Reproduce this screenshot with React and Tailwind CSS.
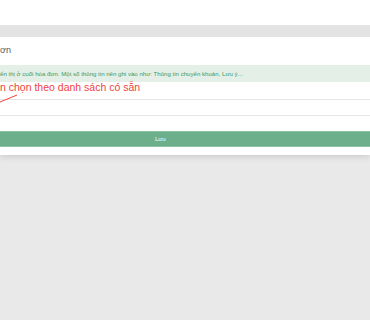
export default function App() {
  return (
    <div className="relative w-[370px] h-[320px] overflow-hidden bg-[#e9e9e9]" style={{ fontFamily: '"Liberation Sans", Arial, sans-serif' }}>
      <div className="bg-white h-[155px] shadow-[0_2px_6px_rgba(0,0,0,0.12)] flex flex-col">
        <div className="h-[25px]" />
        <div className="h-[12px] bg-[#e3e3e3]" />
        <div className="h-[28px] flex items-center text-[9px] text-[#555]">ơn</div>
        <div className="h-[17px] bg-[#e4efe8] flex items-center text-[6.1px] text-[#3f9a5f] whitespace-nowrap">
          ển thị ở cuối hóa đơn. Một số thông tin nên ghi vào như: Thông tin chuyển khoản, Lưu ý...
        </div>
        <div className="h-[17px]" />
        <div className="h-[17px] border-y border-[#e6e6e6]" />
        <div className="h-[15px]" />
        <div className="h-[16px] bg-[#6caf8a] border-y border-[#8cc1a3] flex items-center pl-[155px] text-[6px] text-white">Lưu</div>
      </div>
      <div className="absolute left-0 top-[82px] text-[10.5px] text-[#f0433d] whitespace-nowrap leading-none">n chọn theo danh sách có sẵn</div>
      <svg className="absolute left-0 top-[92px]" width="24" height="14" viewBox="0 0 24 14">
        <line x1="0" y1="10" x2="17" y2="3" stroke="#f0433d" strokeWidth="1" />
      </svg>
    </div>
  );
}
